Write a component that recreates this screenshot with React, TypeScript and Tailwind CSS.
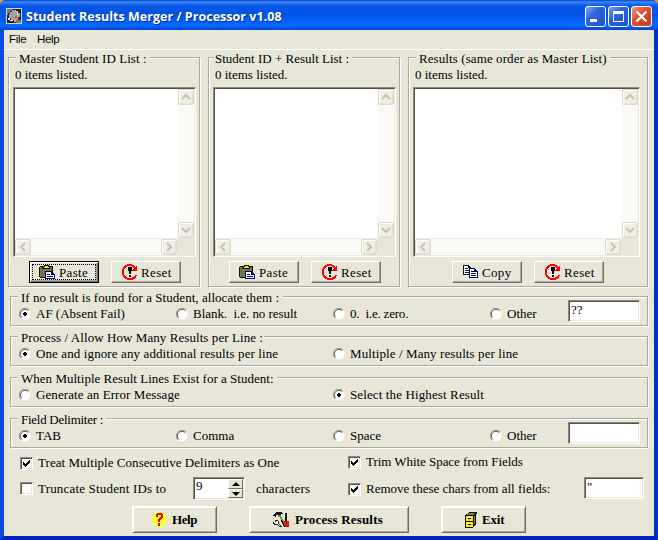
import type { ReactNode } from "react";

const serif = "font-['Liberation_Serif',serif] text-[13px] leading-4 whitespace-pre text-black";
const sunken =
  "border border-t-[#8c8a7d] border-l-[#8c8a7d] border-r-white border-b-white bg-white shadow-[inset_1px_1px_0_#55534a,inset_-1px_-1px_0_#ece9d8]";
const face = "bg-[#e8e7d7]";

function Legend({ text, className }: { text: string; className: string }) {
  return <div className={`-mt-[7px] h-4 ${face} ${serif} ${className}`}>{text}</div>;
}

function GroupBox({ children, className = "" }: { children: ReactNode; className?: string }) {
  return (
    <section
      className={`mr-px mb-px flex flex-col items-start border border-[#aca996] shadow-[1px_1px_0_#fff,inset_1px_1px_0_#fff] ${className}`}
    >
      {children}
    </section>
  );
}

function ScrollArrow({ d }: { d: string }) {
  return (
    <div className="flex h-4 w-4 shrink-0 items-center justify-center rounded-[2px] border border-[#dcdacb] bg-[#f0efe4] shadow-[inset_1px_1px_0_#fff,inset_-1px_-1px_0_#e2e0d2]">
      <svg width="10" height="10" viewBox="0 0 10 10" fill="none" stroke="#c4c2b5" strokeWidth="2">
        <path d={d} />
      </svg>
    </div>
  );
}

function ListBox({ className }: { className: string }) {
  return (
    <div className={`grid h-[170px] grid-cols-[1fr_17px] grid-rows-[1fr_17px] p-px ${sunken} ${className}`}>
      <div className="bg-white" />
      <div className="flex flex-col items-center justify-between bg-[#fbfaf7]">
        <ScrollArrow d="M1 7l4-4l4 4" />
        <ScrollArrow d="M1 3l4 4l4-4" />
      </div>
      <div className="flex items-center justify-between border-t border-[#efeee6] bg-[#fafaf6]">
        <ScrollArrow d="M7 1l-4 4l4 4" />
        <ScrollArrow d="M3 1l4 4l-4 4" />
      </div>
      <div className={face} />
    </div>
  );
}

function PasteIcon() {
  return (
    <svg width="17" height="15" viewBox="0 0 17 15" shapeRendering="crispEdges">
      <path fill="#111" d="M1 1h13v12H1zM0 2h1v10H0z" />
      <path fill="#77763e" d="M1 2h12v10H1z" />
      <path fill="#111" d="M5 0h5v1h1v3H3V2h2z" />
      <path fill="#f4e900" d="M6 1h3v1h1v1H5V2h1z" />
      <path fill="#000080" d="M6 6h7v1h1v1h1v1h1v5H6z" />
      <path fill="#fff" d="M7 7h5v3h3v3H7z" />
      <path fill="#000080" d="M8 9h3v1H8zM8 11h6v1H8z" />
    </svg>
  );
}

function CopyIcon() {
  return (
    <svg width="16" height="14" viewBox="0 0 16 14" shapeRendering="crispEdges">
      <path fill="#111" d="M0 0h6v1h1v1h1v8H0z" />
      <path fill="#fff" d="M1 1h4v2h2v6H1z" />
      <path fill="#111" d="M2 3h3v1H2zM2 5h4v1H2zM2 7h4v1H2z" />
      <path fill="#000080" d="M6 3h6v1h1v1h1v1h1v7H6z" />
      <path fill="#fff" d="M7 4h4v3h3v5H7z" />
      <path fill="#000080" d="M8 6h3v1H8zM8 8h5v1H8zM8 10h5v1H8z" />
    </svg>
  );
}

function ResetIcon() {
  return (
    <svg width="16" height="16" viewBox="0 0 16 16" shapeRendering="crispEdges">
      <path
        fill="#f00"
        d="M5 0h5v1h2v1h1v1h1V2h1v5H9V6h2V5h1V4h-1V3h-1V2H5v1H4v1H3v1H2v6h1v1h1v1h1v1h5v-1h2v-1h1v-1h2v1h-1v2h-1v1h-2v1H5v-1H3v-1H2v-1H1v-2H0V5h1V3h1V2h1V1h2z"
      />
      <path d="M6 3h4v4H9v3H7V7H6zM7 11h2v2H7z" fill="#000" />
    </svg>
  );
}

function HelpIcon() {
  return (
    <svg width="15" height="15" viewBox="0 0 15 15" shapeRendering="crispEdges">
      <path fill="#ffff38" d="M5 0h5v1h2v1h1v1h1v2h1v5h-1v2h-1v1h-1v1h-2v1H5v-1H3v-1H2v-1H1v-2H0V5h1V3h1V2h1V1h2z" />
      <path fill="#f00000" d="M5 1h5v1h1v4h-1v1H9v1H8v2H6V7h1V6h1V5h1V3H6v2H4V2h1zM6 11h2v3H6z" />
    </svg>
  );
}

function ToolsIcon() {
  return (
    <svg width="17" height="16" viewBox="0 0 17 16" shapeRendering="crispEdges">
      <path fill="#111" d="M3 0h6v1h1v1H8v1H7v1H5V3H3v2H2V4H0V3h1V2h1V1h1zM12 1h2v8h-2z" />
      <path fill="#88862c" d="M5 3h3v2h1v2h1v1h1v2h1v2h1v2h1v1h-2v-2h-1v-2h-1v-1H9V9H8V7H7V5H5z" />
      <path fill="#111" d="M8 8h1v1h1v2h1v2h1v2h-1v-1h-1v-2H9v-2H8z" />
      <path fill="#e8140c" d="M11 9h5v6h-4v-3h-1z" />
      <path fill="#790000" d="M13 10h1v1h-1z" />
      <path fill="#222" d="M2 8h3v1h1v3h1v1h1v1h1v1H6v-1H5v-1H1v-1H0v-2h1v1h2v-1H2z" />
      <path fill="#fff" d="M3 9h2v3h1v1h1v1H6v-1H5v-1H2v-1h1zM1 10h1v1H1z" />
    </svg>
  );
}

function CabinetIcon() {
  return (
    <svg width="12" height="16" viewBox="0 0 12 16" shapeRendering="crispEdges">
      <path fill="#111" d="M4 0h8v2h-1v11h-1v1H9v1H8v1H0V3h1V2h2V1h1z" />
      <path fill="#f4e900" d="M1 4h7v5H1zM1 10h7v5H1z" />
      <path fill="#85832b" d="M4 1h6v1H9v1H2V2h2zM9 4h1v8H9z" />
      <path fill="#fff9a0" d="M2 5h5v1H2zM2 11h5v1H2z" />
      <path fill="#111" d="M3 6h3v1H3zM3 12h3v1H3z" />
    </svg>
  );
}

function SmallButton({ icon, label, focused }: { icon: ReactNode; label: string; focused?: boolean }) {
  return (
    <button
      className={`flex h-[22px] w-[70px] shrink-0 items-center border p-[3px] ${face} ${
        focused
          ? "border-black shadow-[inset_1px_1px_0_#fff,inset_-1px_-1px_0_#716f64,inset_-2px_-2px_0_#aca899]"
          : "border-t-white border-l-white border-r-[#716f64] border-b-[#716f64] shadow-[inset_-1px_-1px_0_#aca899]"
      }`}
    >
      <span className={`flex h-[14px] w-full items-center ${focused ? "outline-1 outline-dotted outline-black" : ""}`}>
        <span className="ml-[6px] flex w-[17px] shrink-0 justify-center">{icon}</span>
        <span className={`ml-[3px] mt-px tracking-[0.35px] ${serif}`}>{label}</span>
      </span>
    </button>
  );
}

function BigButton({ icon, label, className }: { icon: ReactNode; label: string; className: string }) {
  return (
    <button
      className={`flex h-[27px] shrink-0 items-center border border-t-white border-l-white border-r-[#716f64] border-b-[#716f64] shadow-[inset_1px_1px_0_#fff,inset_-1px_-1px_0_#aca899] ${face} ${className}`}
    >
      {icon}
      <span className={`ml-[5px] font-bold ${serif}`}>{label}</span>
    </button>
  );
}

function Radio({ label, checked, className = "" }: { label: string; checked?: boolean; className?: string }) {
  return (
    <label className="flex h-4 items-center">
      <svg width="12" height="12" viewBox="0 0 12 12" className="shrink-0">
        <circle cx="6" cy="6" r="5.5" fill="#fff" />
        <path d="M1.9 10.1A5.5 5.5 0 0 1 10.1 1.9" fill="none" stroke="#9c998a" strokeWidth="1" />
        <path d="M2.7 9.3A4.5 4.5 0 0 1 9.3 2.7" fill="none" stroke="#5a584e" strokeWidth="1" />
        {checked && <path d="M5 4h2v1h1v2H7v1H5V7H4V5h1z" fill="#000" shapeRendering="crispEdges" />}
      </svg>
      <span className={`ml-[5px] ${serif} ${className}`}>{label}</span>
    </label>
  );
}

function Check({ label, checked, className = "" }: { label: string; checked?: boolean; className?: string }) {
  return (
    <label className="flex h-4 items-center">
      <span className={`h-[13px] w-[13px] shrink-0 ${sunken}`}>
        {checked && (
          <svg width="11" height="11" viewBox="0 0 11 11" shapeRendering="crispEdges">
            <path d="M2 4h1v1h1v1h1V5h1V4h1V3h1V2h1v3H8v1H7v1H6v1H5v1H4V8H3V7H2z" fill="#000" />
          </svg>
        )}
      </span>
      <span className={`ml-[5px] ${serif} ${className}`}>{label}</span>
    </label>
  );
}

function TextInput({ value, className }: { value: string; className: string }) {
  return <div className={`pl-[2px] ${sunken} ${serif} ${className}`}>{value}</div>;
}

function TitleBar() {
  return (
    <header className="flex h-[30px] items-start bg-[linear-gradient(180deg,#0a3fd0_0px,#3c8cf8_2px,#1c6af0_4px,#0555e4_7px,#0054e3_15px,#0260f6_20px,#0566ff_25px,#0560f4_27px,#0144d0_30px)] pl-[6px] pr-[6px]">
      <svg width="16" height="16" viewBox="0 0 16 16" className="mt-2 shrink-0" shapeRendering="crispEdges">
        <path fill="#d0d0d0" d="M0 0h16v16H0z" />
        <path fill="#222" d="M1 1h14v14H1z" />
        <path fill="#777" d="M1 1h5v2H4v2H2v2H1zM10 12h5v3h-5z" />
        <path fill="#aaa" d="M6 2h4v1h2v2h2v4h-2v3h-2v2H8v-2H5v-2H3V6h1V4h2z" />
        <path fill="#8a8a8a" d="M6 4h1v1H6zM8 3h1v2H8zM5 6h2v1H5zM8 6h1v1H8zM10 5h1v2h-1zM6 8h1v2H6zM8 9h1v2H8z" />
        <path fill="#eee" d="M2 10h2v2h3v1H4v-1H2zM11 4h1v3h-1z" />
        <path fill="#e54848" d="M9 8h2v2H9zM11 10h2v1h-2z" />
      </svg>
      <h1 className="ml-1 mt-[9px] font-['Open_Sans',sans-serif] text-[12.5px] leading-4 font-bold tracking-[0.03px] whitespace-pre text-white [text-shadow:1px_1px_0_#002b9a]">
        Student Results Merger / Processor v1.08
      </h1>
      <div className="ml-auto mt-[6px] flex gap-[2px]">
        <div className="h-[21px] w-[21px] rounded-[3px] border border-white bg-[linear-gradient(135deg,#7ba4f4,#2b62dd_40%,#2054d0)]">
          <div className="mt-[12px] ml-[4px] h-[3px] w-[7px] bg-white" />
        </div>
        <div className="h-[21px] w-[21px] rounded-[3px] border border-white bg-[linear-gradient(135deg,#7ba4f4,#2b62dd_40%,#2054d0)]">
          <div className="mt-[4px] ml-[4px] h-[11px] w-[11px] border border-t-[3px] border-white" />
        </div>
        <div className="flex h-[21px] w-[21px] items-center justify-center rounded-[3px] border border-white bg-[linear-gradient(135deg,#f09a80,#e0502c_40%,#c8381a)]">
          <svg width="13" height="13" viewBox="0 0 13 13">
            <path d="M1.5 1.5l10 10M11.5 1.5l-10 10" stroke="#fff" strokeWidth="2.3" />
          </svg>
        </div>
      </div>
    </header>
  );
}

export default function App() {
  return (
    <div className="h-[540px] w-[658px] overflow-hidden bg-[#e0a050]">
      <div className="flex h-full flex-col overflow-hidden rounded-t-[6px] bg-[#0831d9]">
        <TitleBar />
        <div className="flex min-h-0 flex-1 flex-col border-x-4 border-b-4 border-r-[#0030c4] border-b-[#0026b8] border-l-[#0a4be8]">
          <div className={`flex min-h-0 flex-1 flex-col ${face}`}>
            <nav className="flex h-[20px] shrink-0 border-b border-white pl-[5px] pt-px font-['Liberation_Sans',sans-serif] text-[11.5px] leading-4 tracking-[-0.3px] text-black">
              <span className="w-[28px]">File</span>
              <span>Help</span>
            </nav>

            <main className="flex flex-col">
              <div className="mt-[7px] ml-1 flex gap-[7px]">
                <GroupBox className="h-[230px] w-[192px]">
                  <Legend text="Master Student ID List :" className="ml-[7px] w-[134px] pl-[3px] tracking-[0.05px]" />
                  <p className={`ml-[6px] ${serif}`}>0 items listed.</p>
                  <ListBox className="mt-[4px] ml-1 w-[183px]" />
                  <div className="mt-1 ml-5 flex gap-3">
                    <SmallButton icon={<PasteIcon />} label="Paste" focused />
                    <SmallButton icon={<ResetIcon />} label="Reset" />
                  </div>
                </GroupBox>
                <GroupBox className="h-[230px] w-[192px]">
                  <Legend text="Student ID + Result List :" className="ml-[5px] w-[138px] pl-px" />
                  <p className={`ml-[6px] ${serif}`}>0 items listed.</p>
                  <ListBox className="mt-[4px] ml-1 w-[183px]" />
                  <div className="mt-1 ml-5 flex gap-3">
                    <SmallButton icon={<PasteIcon />} label="Paste" />
                    <SmallButton icon={<ResetIcon />} label="Reset" />
                  </div>
                </GroupBox>
                <GroupBox className="h-[230px] w-[240px]">
                  <Legend text="Results (same order as Master List)" className="ml-[7px] w-[194px] pl-[3px] tracking-[0.09px]" />
                  <p className={`ml-[6px] ${serif}`}>0 items listed.</p>
                  <ListBox className="mt-[4px] ml-1 w-[227px]" />
                  <div className="mt-1 ml-[43px] flex gap-3">
                    <SmallButton icon={<CopyIcon />} label="Copy" />
                    <SmallButton icon={<ResetIcon />} label="Reset" />
                  </div>
                </GroupBox>
              </div>

              <div className="mt-[8px] ml-[6px] flex w-[639px] flex-col gap-[10px]">
                <GroupBox className="h-[30px]">
                  <Legend text="If no result is found for a Student, allocate them :" className="ml-[7px] w-[265px] pl-[3px] tracking-[0.04px]" />
                  <div className="ml-2 grid h-4 grid-cols-[157px_157px_157px_78px_72px]">
                    <Radio label="AF (Absent Fail)" checked />
                    <Radio label="Blank.  i.e. no result" className="tracking-[-0.04px]" />
                    <Radio label="0.  i.e. zero." className="tracking-[-0.2px]" />
                    <Radio label="Other" />
                    <TextInput value="??" className="-mt-[6px] h-[22px] pt-px" />
                  </div>
                </GroupBox>
                <GroupBox className="-mt-px h-[30px]">
                  <Legend text="Process / Allow How Many Results per Line :" className="ml-[7px] w-[246px] pl-[3px] tracking-[0.07px]" />
                  <div className="ml-2 grid h-4 grid-cols-[314px_300px]">
                    <Radio label="One and ignore any additional results per line" checked className="tracking-[0.11px]" />
                    <Radio label="Multiple / Many results per line" className="tracking-[0.1px]" />
                  </div>
                </GroupBox>
                <GroupBox className="h-[30px]">
                  <Legend text="When Multiple Result Lines Exist for a Student:" className="ml-[7px] w-[259px] pl-[3px] tracking-[0.02px]" />
                  <div className="ml-2 grid h-4 grid-cols-[314px_300px]">
                    <Radio label="Generate an Error Message" className="tracking-[0.08px]" />
                    <Radio label="Select the Highest Result" checked className="tracking-[0.12px]" />
                  </div>
                </GroupBox>
                <GroupBox className="h-[30px]">
                  <Legend text="Field Delimiter :" className="ml-[7px] w-[88px] pl-[3px] tracking-[-0.27px]" />
                  <div className="ml-2 grid h-4 grid-cols-[157px_157px_157px_78px_72px]">
                    <Radio label="TAB" checked />
                    <Radio label="Comma" />
                    <Radio label="Space" />
                    <Radio label="Other" />
                    <TextInput value="" className="-mt-[6px] h-[22px]" />
                  </div>
                </GroupBox>
              </div>

              <div className="mt-[5px] ml-4 grid w-[630px] grid-cols-[328px_1fr]">
                <div className="pt-px">
                  <Check label="Treat Multiple Consecutive Delimiters as One" checked className="tracking-[0.04px]" />
                  <div className="mt-[6px] flex items-center">
                    <div className="w-[173px]">
                      <Check label="Truncate Student IDs to" className="tracking-[0.18px]" />
                    </div>
                    <div className={`flex h-[23px] w-[52px] ${sunken}`}>
                      <span className={`w-[34px] pl-[2px] ${serif}`}>9</span>
                      <div className="mt-px flex h-[19px] w-[15px] flex-col">
                        <div className="flex h-[10px] items-center justify-center border border-t-white border-l-white border-r-[#716f64] border-b-[#716f64] bg-[#e8e7d7]">
                          <svg width="8" height="4" viewBox="0 0 8 4"><path d="M4 0l4 4H0z" /></svg>
                        </div>
                        <div className="flex h-[9px] items-center justify-center border border-t-white border-l-white border-r-[#716f64] border-b-[#716f64] bg-[#e8e7d7]">
                          <svg width="8" height="4" viewBox="0 0 8 4"><path d="M4 4l4-4H0z" /></svg>
                        </div>
                      </div>
                    </div>
                    <span className={`ml-[11px] tracking-[0.15px] ${serif}`}>characters</span>
                  </div>
                </div>
                <div>
                  <Check label="Trim White Space from Fields" checked className="tracking-[-0.05px]" />
                  <div className="mt-[7px] flex h-[23px]">
                    <div className="w-[236px] pt-[4px]">
                      <Check label="Remove these chars from all fields:" checked />
                    </div>
                    <TextInput value={'"'} className="h-[22px] w-[60px] pt-px" />
                  </div>
                </div>
              </div>

              <footer className="mt-[6px] ml-32 flex gap-8">
                <BigButton icon={<HelpIcon />} label="Help" className="w-[85px] pl-[19px] tracking-[-0.4px]" />
                <BigButton icon={<ToolsIcon />} label="Process Results" className="w-[160px] pl-[23px] tracking-[0.17px]" />
                <BigButton icon={<CabinetIcon />} label="Exit" className="w-[85px] pl-[23px] tracking-[-0.2px]" />
              </footer>
            </main>
          </div>
        </div>
      </div>
    </div>
  );
}
